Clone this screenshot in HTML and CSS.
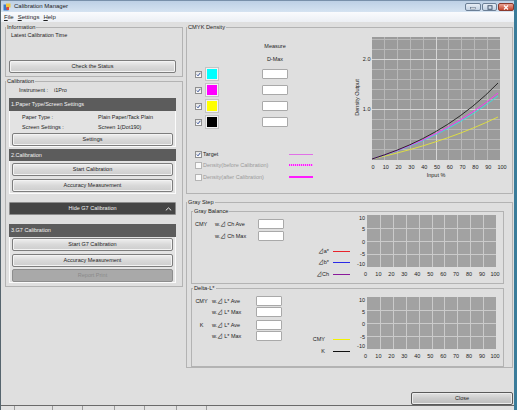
FILE: index.html
```html
<!DOCTYPE html>
<html lang="en">
<head>
    <meta charset="UTF-8">
    <title>Calibration Manager</title>
    <link rel="stylesheet" href="styles.css">
</head>
<body>
<div class="window">
    <div class="titlebar">
        <svg class="app-icon" width="8" height="8" viewBox="0 0 8 8">
            <rect x="0.5" y="1.5" width="5" height="6" fill="#3b78c8"/>
            <rect x="3" y="0.5" width="4.5" height="4" fill="#f2c53d"/>
            <rect x="3.5" y="4" width="2.5" height="3" fill="#e2473a"/>
        </svg>
        <span class="title">Calibration Manager</span>
        <div class="win-buttons">
            <span class="wbtn min"><svg width="6" height="5" viewBox="0 0 6 5"><rect x="0.5" y="2.5" width="5" height="1.5" fill="#fff" stroke="#4a5d74" stroke-width="0.5"/></svg></span>
            <span class="wbtn max"><svg width="6" height="5" viewBox="0 0 6 5"><rect x="1" y="0.7" width="4" height="3.6" fill="none" stroke="#4a5d74" stroke-width="1"/></svg></span>
            <span class="wbtn close"><svg width="6" height="5" viewBox="0 0 6 5"><path d="M1 0.5L5 4.5M5 0.5L1 4.5" stroke="#fff" stroke-width="1.2"/></svg></span>
        </div>
    </div>
    <div class="menubar">
        <span class="menu"><u>F</u>ile</span>
        <span class="menu"><u>S</u>ettings</span>
        <span class="menu"><u>H</u>elp</span>
    </div>

    <div class="main">
        <div class="left">
            <fieldset class="group info">
                <legend>Information</legend>
                <div class="latest">Latest Calibration Time</div>
                <button class="btn">Check the Status</button>
            </fieldset>

            <fieldset class="group calib">
                <legend>Calibration</legend>
                <div class="instrument"><span>Instrument :</span><span>i1Pro</span></div>

                <div class="step-head h1">1.Paper Type/Screen Settings</div>
                <div class="step-body s1">
                    <div class="kv"><span class="k">Paper Type :</span><span>Plain Paper/Tack Plain</span></div>
                    <div class="kv"><span class="k">Screen Settings :</span><span>Screen 1(Dot190)</span></div>
                    <button class="btn">Settings</button>
                </div>

                <div class="step-head h2">2.Calibration</div>
                <div class="step-body s2">
                    <button class="btn">Start Calibration</button>
                    <button class="btn">Accuracy Measurement</button>
                </div>

                <div class="toggle">
                    <span></span>
                    <span>Hide G7 Calibration</span>
                    <svg class="chevron" width="7" height="4" viewBox="0 0 7 4"><path d="M0.8 3.4L3.5 0.9L6.2 3.4" fill="none" stroke="#fff" stroke-width="0.9"/></svg>
                </div>

                <div class="step-head h3">3.G7 Calibration</div>
                <div class="step-body s3">
                    <button class="btn">Start G7 Calibration</button>
                    <button class="btn">Accuracy Measurement</button>
                    <button class="btn disabled">Report Print</button>
                </div>
            </fieldset>
        </div>

        <div class="right">
            <fieldset class="group density">
                <legend>CMYK Density</legend>
                <div class="dens-body">
                    <div class="dens-left">
                        <div class="dm-label measure">Measure</div>
                        <div class="dm-label dmax">D-Max</div>
                        <div class="ink-rows">
                            <div class="ink-row">
                                <span class="chk"><svg width="5" height="5" viewBox="0 0 5 5"><path d="M0.8 2.5L2 3.8L4.3 0.9" fill="none" stroke="#23408e" stroke-width="0.9"/></svg></span>
                                <span class="swatch cyan"></span>
                                <span class="field"></span>
                            </div>
                            <div class="ink-row">
                                <span class="chk"><svg width="5" height="5" viewBox="0 0 5 5"><path d="M0.8 2.5L2 3.8L4.3 0.9" fill="none" stroke="#23408e" stroke-width="0.9"/></svg></span>
                                <span class="swatch magenta"></span>
                                <span class="field"></span>
                            </div>
                            <div class="ink-row">
                                <span class="chk"><svg width="5" height="5" viewBox="0 0 5 5"><path d="M0.8 2.5L2 3.8L4.3 0.9" fill="none" stroke="#23408e" stroke-width="0.9"/></svg></span>
                                <span class="swatch yellow"></span>
                                <span class="field"></span>
                            </div>
                            <div class="ink-row">
                                <span class="chk"><svg width="5" height="5" viewBox="0 0 5 5"><path d="M0.8 2.5L2 3.8L4.3 0.9" fill="none" stroke="#23408e" stroke-width="0.9"/></svg></span>
                                <span class="swatch black"></span>
                                <span class="field"></span>
                            </div>
                        </div>
                        <div class="curve-rows">
                            <div class="curve-row">
                                <span class="chk"><svg width="5" height="5" viewBox="0 0 5 5"><path d="M0.8 2.5L2 3.8L4.3 0.9" fill="none" stroke="#23408e" stroke-width="0.9"/></svg></span>
                                <span class="name">Target</span>
                                <span class="line target"></span>
                            </div>
                            <div class="curve-row off">
                                <span class="chk"></span>
                                <span class="name">Density(before Calibration)</span>
                                <span class="line before"></span>
                            </div>
                            <div class="curve-row off">
                                <span class="chk"></span>
                                <span class="name">Density(after Calibration)</span>
                                <span class="line after"></span>
                            </div>
                        </div>
                    </div>

                    <svg class="dens-chart" width="158" height="155" viewBox="-18 -6 158 155">
                        <rect x="0" y="0" width="128" height="123" fill="#9b9b9b"/>
                        <path d="M12.5 0V123M25.5 0V123M38.5 0V123M51.5 0V123M76.5 0V123M89.5 0V123M102.5 0V123M115.5 0V123M0 112.5H128M0 102.5H128M0 92.5H128M0 82.5H128M0 62.5H128M0 52.5H128M0 42.5H128M0 32.5H128M0 12.5H128M0 2.5H128" stroke="#b8b8b8" stroke-width="1"/>
                        <path d="M64.5 0V123M0 72.5H128M0 22.5H128" stroke="#d6d6d6" stroke-width="1"/>
                        <polyline points="0,122 12.6,119.1 25.2,116 37.8,112.6 50.4,109 63,105 75.6,100.8 88.2,96.2 100.8,91.2 113.4,85.8 126,80" fill="none" stroke="#e4e43a" stroke-width="0.9"/>
                        <polyline points="0,122 12.6,118.1 25.2,113.8 37.8,109 50.4,103.8 63,98 75.6,91.6 88.2,84.6 100.8,76.9 113.4,68.4 126,59" fill="none" stroke="#35e0e0" stroke-width="0.9"/>
                        <polyline points="0,122 12.6,117.9 25.2,113.5 37.8,108.5 50.4,103.1 63,97 75.6,90.4 88.2,83 100.8,74.9 113.4,66 126,56.1" fill="none" stroke="#ff2cff" stroke-width="0.9"/>
                        <polyline points="0,122 12.6,117.8 25.2,113.1 37.8,107.8 50.4,101.8 63,95 75.6,87.4 88.2,78.8 100.8,69.2 113.4,58.3 126,46" fill="none" stroke="#1c1c1c" stroke-width="0.9"/>
                        <text x="-1.5" y="24" text-anchor="end">2.0</text>
                        <text x="-1.5" y="73.5" text-anchor="end">1.0</text>
                        <g text-anchor="middle">
                            <text x="1" y="131.5">0</text>
                            <text x="13.8" y="131.5">10</text>
                            <text x="26.6" y="131.5">20</text>
                            <text x="39.4" y="131.5">30</text>
                            <text x="52.2" y="131.5">40</text>
                            <text x="65" y="131.5">50</text>
                            <text x="77.8" y="131.5">60</text>
                            <text x="90.6" y="131.5">70</text>
                            <text x="103.4" y="131.5">80</text>
                            <text x="116.2" y="131.5">90</text>
                            <text x="130" y="131.5">100</text>
                            <text x="64" y="140">Input %</text>
                            <text transform="translate(-13.3 60.5) rotate(-90)">Density Output</text>
                        </g>
                    </svg>
                </div>
            </fieldset>

            <fieldset class="group graystep">
                <legend>Gray Step</legend>

                <fieldset class="group gb">
                    <legend>Gray Balance</legend>
                    <div class="gb-body">
                        <div class="gb-form">
                            <span>CMY</span><span>w.⊿ Ch Ave</span><span class="field"></span>
                            <span></span><span>w.⊿ Ch Max</span><span class="field"></span>
                        </div>
                        <div class="gb-legend">
                            <div class="leg-row"><span>⊿a*</span><span class="leg-line red"></span></div>
                            <div class="leg-row"><span>⊿b*</span><span class="leg-line blue"></span></div>
                            <div class="leg-row"><span>⊿Ch</span><span class="leg-line purple"></span></div>
                        </div>
                        <svg class="small-chart" width="151" height="64" viewBox="-15 0 151 64">
                            <rect width="129" height="52" fill="#a2a2a2"/>
                            <path d="M13.5 0V52M26.5 0V52M39.5 0V52M52.5 0V52M65.5 0V52M77.5 0V52M90.5 0V52M103.5 0V52M116.5 0V52M0 13.5H129M0 26.5H129M0 39.5H129" stroke="#cbcbcb" stroke-width="1"/>
                            <g text-anchor="end">
                                <text x="-2" y="5.3">10</text>
                                <text x="-2" y="16">5</text>
                                <text x="-2" y="28.6">0</text>
                                <text x="-2" y="40.6">-5</text>
                                <text x="-2" y="50.5">-10</text>
                            </g>
                            <g text-anchor="middle">
                                <text x="-1.5" y="60.5">0</text>
                                <text x="11.4" y="60.5">10</text>
                                <text x="24.4" y="60.5">20</text>
                                <text x="37.3" y="60.5">30</text>
                                <text x="50.3" y="60.5">40</text>
                                <text x="63.2" y="60.5">50</text>
                                <text x="76.2" y="60.5">60</text>
                                <text x="89.1" y="60.5">70</text>
                                <text x="102.1" y="60.5">80</text>
                                <text x="115" y="60.5">90</text>
                                <text x="128" y="60.5">100</text>
                            </g>
                        </svg>
                    </div>
                </fieldset>

                <fieldset class="group dl">
                    <legend>Delta-L*</legend>
                    <div class="dl-body">
                        <div class="dl-form">
                            <div class="dl-block">
                                <span class="tag">CMY</span><span>w.⊿ L* Ave</span><span class="field"></span>
                                <span></span><span>w.⊿ L* Max</span><span class="field"></span>
                            </div>
                            <div class="dl-block">
                                <span class="tag">K</span><span>w.⊿ L* Ave</span><span class="field"></span>
                                <span></span><span>w.⊿ L* Max</span><span class="field"></span>
                            </div>
                        </div>
                        <div class="dl-legend">
                            <div class="leg-row"><span>CMY</span><span class="leg-line ylw"></span></div>
                            <div class="leg-row"><span>K</span><span class="leg-line blk"></span></div>
                        </div>
                        <svg class="small-chart" width="151" height="69" viewBox="-15 -5 151 69">
                            <rect width="129" height="52" fill="#a2a2a2"/>
                            <path d="M13.5 0V52M26.5 0V52M39.5 0V52M52.5 0V52M65.5 0V52M77.5 0V52M90.5 0V52M103.5 0V52M116.5 0V52M0 13.5H129M0 26.5H129M0 39.5H129" stroke="#cbcbcb" stroke-width="1"/>
                            <g text-anchor="end">
                                <text x="-2" y="4.5">10</text>
                                <text x="-2" y="16.5">5</text>
                                <text x="-2" y="29">0</text>
                                <text x="-2" y="41.5">-5</text>
                                <text x="-2" y="50.7">-10</text>
                            </g>
                            <g text-anchor="middle">
                                <text x="-1.5" y="60.7">0</text>
                                <text x="11.4" y="60.7">10</text>
                                <text x="24.4" y="60.7">20</text>
                                <text x="37.3" y="60.7">30</text>
                                <text x="50.3" y="60.7">40</text>
                                <text x="63.2" y="60.7">50</text>
                                <text x="76.2" y="60.7">60</text>
                                <text x="89.1" y="60.7">70</text>
                                <text x="102.1" y="60.7">80</text>
                                <text x="115" y="60.7">90</text>
                                <text x="128" y="60.7">100</text>
                            </g>
                        </svg>
                    </div>
                </fieldset>
            </fieldset>
        </div>
    </div>

    <div class="footer">
        <button class="btn close-btn">Close</button>
    </div>
    <div class="taskbar">
        <span style="width: 14px"></span>
        <span style="width: 38px"></span>
        <span style="width: 30px"></span>
        <span style="width: 32px"></span>
        <span style="width: 30px"></span>
        <span style="width: 32px"></span>
        <span style="width: 30px"></span>
    </div>
</div>
</body>
</html>
```

FILE: styles.css
```css
* {
    box-sizing: border-box;
}
html, body {
    margin: 0;
    padding: 0;
}
body {
    font-family: "Liberation Sans", Arial, "Noto Sans CJK JP", sans-serif;
    font-size: 5.5px;
    line-height: 7px;
    color: #1d1d1d;
    background: #dfdfdf;
}
.window {
    width: 517px;
    height: 410px;
    display: flex;
    flex-direction: column;
    background: #dfdfdf;
    border-left: 1px solid #56656e;
    border-right: 3px solid #3a7c9a;
    overflow: hidden;
}

/* title + menu */
.titlebar {
    height: 12px;
    flex: none;
    display: flex;
    align-items: center;
    padding-left: 2px;
    background: linear-gradient(#bdd0e5, #d5e3f1);
    border-top: 1px solid #7890aa;
}
.app-icon {
    flex: none;
    margin-right: 3px;
}
.title {
    font-size: 6px;
    color: #1a1a1a;
}
.win-buttons {
    margin-left: auto;
    align-self: flex-start;
    margin-top: 2px;
    display: flex;
    gap: 1px;
}
.wbtn {
    height: 8px;
    width: 16px;
    display: flex;
    align-items: center;
    justify-content: center;
    border: 1px solid #6b7f96;
    border-radius: 2px;
    background: linear-gradient(#e6edf5, #c3d2e3);
}
.wbtn.max {
    width: 15px;
}
.wbtn.close {
    background: linear-gradient(#eaa494, #c4442c);
    border-color: #8a3a2e;
}
.menubar {
    height: 10px;
    flex: none;
    display: flex;
    align-items: center;
    padding-left: 3px;
    font-size: 6px;
    background: linear-gradient(#fafbfd, #eceff4);
}
.menu {
    margin-right: 4px;
}

/* main area */
.main {
    flex: 1;
    display: flex;
    gap: 3px;
    padding: 2px 1px 0 4px;
}
.left {
    width: 178px;
    flex: none;
}
.right {
    width: 327px;
    flex: none;
}
.group {
    margin: 0;
    min-width: 0;
    padding: 0;
    border: 1px solid #b3b3b3;
}
.group > legend {
    padding: 0 1px;
    font-size: 5.7px;
    line-height: 7px;
}

/* buttons */
.btn {
    display: block;
    width: 100%;
    height: 13px;
    padding: 0;
    margin: 0;
    font: inherit;
    line-height: 11px;
    color: #1d1d1d;
    text-align: center;
    border: 1px solid #7d7d7d;
    border-radius: 2px;
    background: linear-gradient(#efefef, #d9d9d9 50%, #cdcdcd);
    box-shadow: inset 0 0 0 1px #f3f3f3;
}
.btn.disabled {
    color: #8a8a8a;
    border-color: #8d8d8d;
    background: #a9a9a9;
    box-shadow: none;
}

/* information */
.info {
    height: 53px;
    padding: 0 6px 0 3px;
}
.info > legend,
.calib > legend {
    margin-left: -3px;
}
.latest {
    margin: 1px 0 0 2px;
}
.info .btn {
    margin-top: 21px;
}

/* calibration */
.calib {
    margin-top: 1px;
    padding: 0 6px 3px 3px;
}
.instrument {
    margin: 2px 0 0 10px;
    display: flex;
    gap: 6px;
}
.step-head {
    height: 13px;
    line-height: 13px;
    padding-left: 2px;
    background: #5c5c5c;
    color: #f4f4f4;
}
.step-head.h1 {
    margin-top: 4px;
}
.step-head.h2 {
    margin-top: 2px;
    height: 12px;
    line-height: 12px;
}
.step-head.h3 {
    margin-top: 9px;
}
.step-body {
    display: flex;
    flex-direction: column;
    padding: 0 2px;
    border: 1px solid #fbfbfb;
    border-top: 0;
    background: #e3e3e3;
}
.s1 {
    padding-top: 3px;
}
.kv {
    display: flex;
    padding-left: 10px;
}
.kv .k {
    width: 76px;
}
.kv + .kv {
    margin-top: 3px;
}
.s1 .btn {
    margin-top: 2px;
}
.s2 {
    padding-top: 2px;
    padding-bottom: 1px;
}
.s2 .btn + .btn {
    margin-top: 3px;
}
.s3 {
    padding-top: 1px;
}
.s3 .btn + .btn {
    margin-top: 3px;
}
.s3 .btn.disabled {
    margin-top: 2px;
}
.toggle {
    margin-top: 8px;
    height: 13px;
    display: grid;
    grid-template-columns: 1fr auto 1fr;
    align-items: center;
    background: #454545;
    color: #f2f2f2;
    border: 1px solid #8c8c8c;
    border-radius: 1px;
}
.chevron {
    justify-self: end;
    margin-right: 3px;
}

/* CMYK density */
.density {
    height: 170px;
}
.dens-body {
    display: flex;
}
.dens-left {
    width: 160px;
    flex: none;
}
.dm-label {
    width: 26px;
    margin-left: 75px;
    text-align: center;
    white-space: nowrap;
}
.dm-label.measure {
    margin-top: 12px;
}
.dm-label.dmax {
    margin-top: 6px;
}
.ink-rows {
    margin-top: 5px;
    display: flex;
    flex-direction: column;
    gap: 4px;
}
.ink-row {
    height: 12px;
    display: flex;
    align-items: center;
}
.chk {
    width: 7px;
    height: 7px;
    flex: none;
    display: flex;
    align-items: center;
    justify-content: center;
    border: 1px solid #8f8f8f;
    background: linear-gradient(#e4e4e4, #fcfcfc);
}
.ink-row .chk,
.curve-row .chk {
    margin-left: 8px;
}
.swatch {
    width: 12px;
    height: 12px;
    margin-left: 4px;
    border: 1px solid #f2f2f2;
    outline: 1px solid #c4c4c4;
}
.cyan { background: #00ffff; }
.magenta { background: #ff00ff; }
.yellow { background: #ffff00; }
.black { background: #000; }
.field {
    display: block;
    width: 26px;
    height: 10px;
    background: #fff;
    border: 1px solid #a9a9a9;
    border-radius: 1px;
}
.ink-row .field {
    margin-left: 44px;
}
.curve-rows {
    margin-top: 22px;
}
.curve-row {
    height: 8px;
    display: flex;
    align-items: center;
}
.curve-row + .curve-row {
    margin-top: 3px;
}
.curve-row:last-child {
    margin-top: 4px;
}
.curve-row .name {
    width: 86px;
    margin-left: 1px;
    white-space: nowrap;
}
.curve-row.off .name {
    color: #9a9a9a;
}
.curve-row.off .chk {
    background: #fafafa;
    border-color: #b5b5b5;
}
.line {
    width: 24px;
}
.line.target {
    height: 1px;
    background: #e070e6;
}
.line.before {
    height: 2px;
    background: repeating-linear-gradient(90deg, #ff1cff 0 1px, #f6a6f6 1px 2px);
}
.line.after {
    height: 2px;
    background: #ff1cff;
}
.dens-chart {
    display: block;
    margin-left: auto;
}
svg text {
    font-family: "Liberation Sans", Arial, sans-serif;
    font-size: 5.5px;
    fill: #1d1d1d;
}

/* gray step */
.graystep {
    margin-top: 5px;
    padding: 0 8px 0 4px;
}
.graystep > legend {
    margin-left: -4px;
}
.gb > legend,
.dl > legend {
    margin-left: 1px;
}
.gb {
    margin-top: 2px;
    height: 76px;
}
.dl {
    margin-top: 1px;
    height: 82px;
}
.gb-body,
.dl-body {
    display: flex;
    align-items: flex-start;
}
.gb-form {
    display: grid;
    grid-template-columns: 20px 43px 26px;
    grid-template-rows: 10px 10px;
    row-gap: 2px;
    align-items: center;
    margin: 4px 0 0 3px;
    white-space: nowrap;
}
.gb-legend {
    width: 50px;
    margin: 32px 0 0 16px;
}
.leg-row {
    height: 8px;
    display: flex;
    align-items: center;
    justify-content: flex-end;
}
.gb-legend .leg-row + .leg-row {
    margin-top: 3px;
}
.gb-legend .leg-row:last-child {
    margin-top: 4px;
}
.leg-line {
    width: 17px;
    height: 1px;
    margin-left: 4px;
}
.red { background: #e8232b; }
.blue { background: #2a2ae6; }
.purple { background: #8a1a9a; }
.ylw { background: #f2f200; }
.blk { background: #111; }
.small-chart {
    display: block;
    margin-left: auto;
}
.dl-form {
    margin: 4px 0 0 3px;
}
.dl-block {
    display: grid;
    grid-template-columns: 17px 44px 26px;
    grid-template-rows: 10px 10px;
    row-gap: 1px;
    align-items: center;
    white-space: nowrap;
}
.dl-block + .dl-block {
    margin-top: 3px;
}
.dl-block .tag {
    width: 13px;
    text-align: center;
}
.dl-legend {
    width: 50px;
    margin: 43px 0 0 18px;
}
.dl-legend .leg-row + .leg-row {
    margin-top: 4px;
}
.dl-legend .leg-line {
    margin-left: 8px;
}

/* footer */
.footer {
    height: 14px;
    flex: none;
    display: flex;
    justify-content: flex-end;
    padding: 1px 1px 0 0;
}
.close-btn {
    width: 102px;
    border-color: #5a5a5a;
    background: linear-gradient(#e2e2e2, #cbcbcb 50%, #bdbdbd);
    box-shadow: inset 0 0 0 1px #ececec;
}
.taskbar {
    height: 5px;
    flex: none;
    display: flex;
    border-top: 1px solid #6a6a6a;
    background: #e2e2e2;
}
.taskbar span {
    border-right: 1px solid #9c9c9c;
}
```
